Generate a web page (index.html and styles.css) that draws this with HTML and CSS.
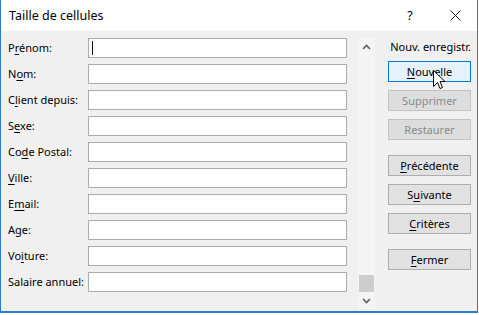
FILE: index.html
```html
<!DOCTYPE html>
<html lang="fr">
<head>
<meta charset="utf-8">
<title>Taille de cellules</title>
<link rel="stylesheet" href="styles.css">
</head>
<body>
<div class="window">
  <div class="titlebar">
    <span class="title">Taille de cellules</span>
    <span class="help">?</span>
    <span class="close"><svg width="11" height="11" viewBox="0 0 11 11"><path d="M0.5 0.5 L10.5 10.5 M10.5 0.5 L0.5 10.5" stroke="#1a1a1a" stroke-width="1" fill="none"/></svg></span>
  </div>
  <div class="body">
    <div class="form">
      <label class="lbl">P<u>r</u>énom:</label><div class="field"><span class="caret"></span></div>
      <label class="lbl">N<u>o</u>m:</label><div class="field"></div>
      <label class="lbl">C<u>l</u>ient depuis:</label><div class="field"></div>
      <label class="lbl">S<u>e</u>xe:</label><div class="field"></div>
      <label class="lbl">Co<u>d</u>e Postal:</label><div class="field"></div>
      <label class="lbl"><u>V</u>ille:</label><div class="field"></div>
      <label class="lbl">E<u>m</u>ail:</label><div class="field"></div>
      <label class="lbl">Age:</label><div class="field"></div>
      <label class="lbl">Vo<u>i</u>ture:</label><div class="field"></div>
      <label class="lbl">Salaire annuel:</label><div class="field"></div>
    </div>
    <div class="scrollbar">
      <div class="sb-btn"><svg width="9" height="6" viewBox="0 0 9 6"><path d="M1 5 L4.5 1.5 L8 5" stroke="#606060" stroke-width="1.6" fill="none"/></svg></div>
      <div class="sb-track"><div class="thumb"></div></div>
      <div class="sb-btn"><svg width="9" height="6" viewBox="0 0 9 6"><path d="M1 1 L4.5 4.5 L8 1" stroke="#606060" stroke-width="1.6" fill="none"/></svg></div>
    </div>
    <div class="panel">
      <div class="status">Nouv. enregistr.</div>
      <div class="group">
        <button class="btn hot"><u>N</u>ouvelle</button>
        <button class="btn" disabled>Supprimer</button>
        <button class="btn" disabled>Restaurer</button>
      </div>
      <div class="group">
        <button class="btn"><u>P</u>récédente</button>
        <button class="btn">S<u>u</u>ivante</button>
        <button class="btn"><u>C</u>ritères</button>
      </div>
      <div class="group">
        <button class="btn"><u>F</u>ermer</button>
      </div>
      <svg class="pointer" width="13" height="20" viewBox="0 0 13 20"><path d="M0.5 0.5 L0.5 16.5 L4.5 12.5 L7 18.5 L9.5 17.5 L7 11.5 L12 11.5 Z" fill="#fff" stroke="#000" stroke-width="1" stroke-linejoin="miter"/></svg>
    </div>
  </div>
</div>
</body>
</html>
```

FILE: styles.css
```css
* { box-sizing: border-box; }
html, body { margin: 0; padding: 0; background: #ffffff; }
body {
  font-family: "Noto Sans", "Open Sans", sans-serif;
  font-size: 11px;
  color: #000;
}
.window {
  width: 478px;
  height: 313px;
  border-left: 1px solid #2b7bd0;
  border-right: 1px solid #2b7bd0;
  border-bottom: 2px solid #2b7bd0;
  background: #f0f0f0;
  display: flex;
  flex-direction: column;
}
.titlebar {
  height: 31px;
  background: #ffffff;
  display: flex;
  align-items: center;
  position: relative;
  flex: none;
}
.title {
  font-size: 12.5px;
  padding-left: 8px;
  padding-bottom: 1px;
  flex: 1;
}
.help {
  font-size: 12.5px;
  width: 46px;
  text-align: center;
  padding-bottom: 1px;
}
.close {
  width: 44px;
  display: flex;
  justify-content: center;
  align-items: center;
}
.body {
  flex: 1;
  display: flex;
  align-items: flex-start;
  padding-top: 7px;
  padding-left: 7px;
}
.form {
  display: grid;
  grid-template-columns: 80px 259px;
  grid-auto-rows: 20px;
  row-gap: 6px;
  align-items: center;
}
.lbl {
  white-space: nowrap;
  line-height: 20px;
  padding-bottom: 1px;
}
.lbl u, .btn u { text-decoration-thickness: 1px; text-underline-offset: 2px; }
.field {
  height: 20px;
  border: 1px solid #ababab;
  background: #ffffff;
  position: relative;
}
.caret {
  position: absolute;
  left: 3px;
  top: 2px;
  width: 1px;
  height: 14px;
  background: #000;
}
.scrollbar {
  margin-left: 11px;
  width: 17px;
  height: 271px;
  background: #f4f4f4;
  display: flex;
  flex-direction: column;
}
.sb-btn {
  height: 17px;
  display: flex;
  align-items: center;
  justify-content: center;
  flex: none;
}
.sb-track {
  flex: 1;
  display: flex;
  flex-direction: column;
  justify-content: flex-end;
  align-items: center;
}
.thumb {
  width: 15px;
  height: 17px;
  background: #cdcdcd;
}
.panel {
  margin-left: 13px;
  width: 83px;
  position: relative;
}
.status {
  height: 17px;
  line-height: 17px;
  text-align: right;
  margin-bottom: 6px;
  white-space: nowrap;
}
.group {
  display: flex;
  flex-direction: column;
  gap: 8px;
  margin-bottom: 15px;
}
.btn {
  font: inherit;
  height: 21px;
  width: 83px;
  padding: 0 0 1px;
  background: #e1e1e1;
  border: 1px solid #adadad;
  color: #000;
  border-radius: 0;
}
.btn:disabled {
  background: #dddddd;
  border-color: #c2c2c2;
  color: #8a8a8a;
}
.btn.hot {
  background: #e5f1fb;
  border-color: #0078d7;
}
.pointer {
  position: absolute;
  left: 45px;
  top: 32px;
}
```
